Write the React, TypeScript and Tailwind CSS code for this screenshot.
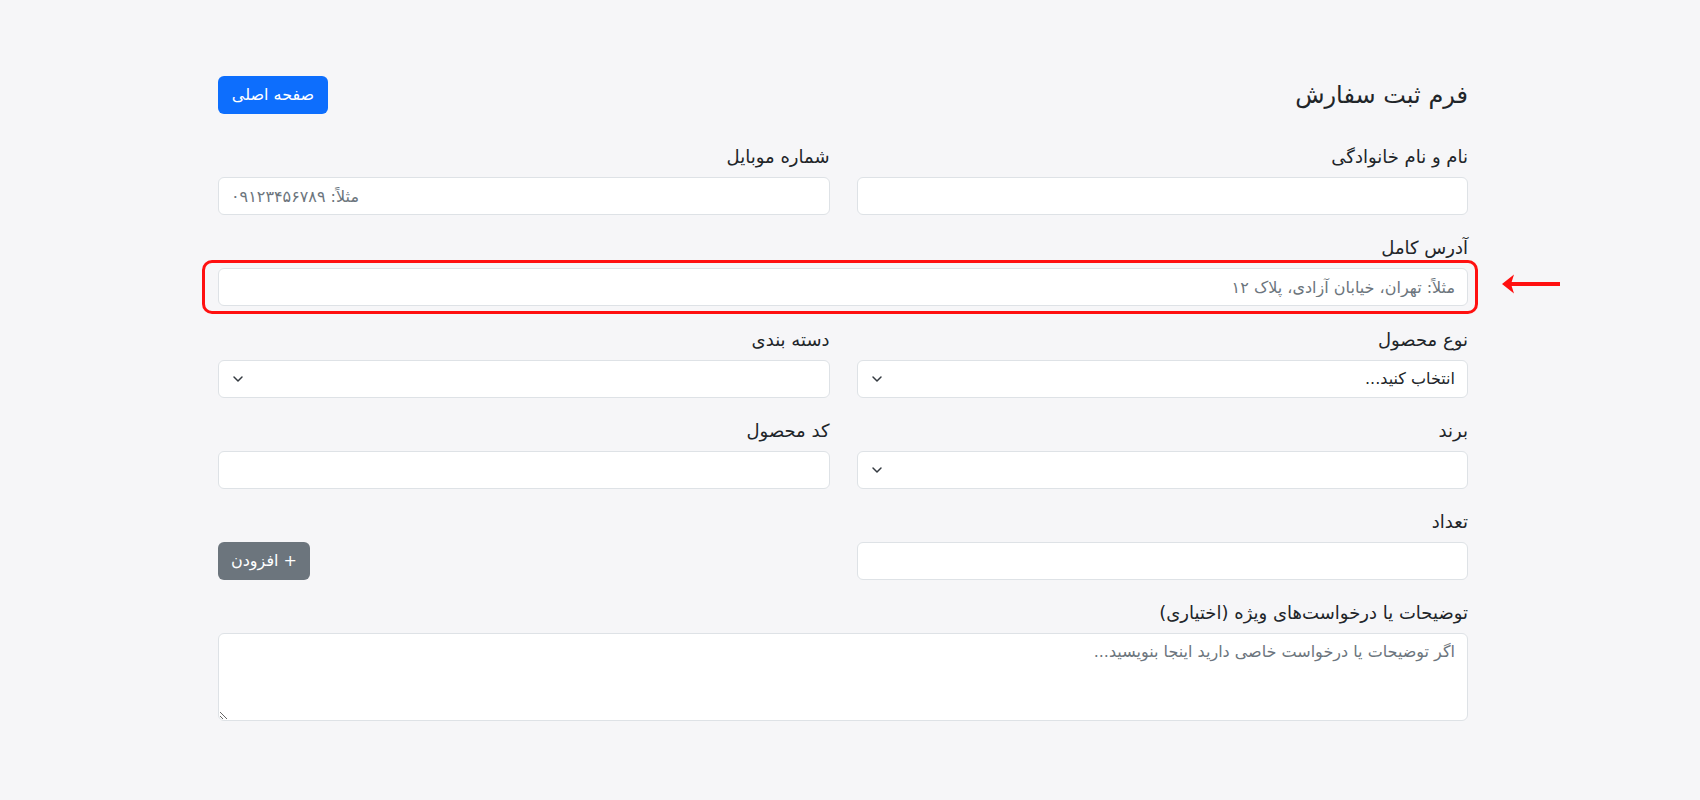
import React from 'react';
import { ChevronDown } from 'lucide-react';

const inputCls =
  'block w-full h-[38px] rounded-md border border-[#dee2e6] bg-white px-3 text-base text-[#212529] placeholder:text-[#6c757d] outline-none';

function Label({ children }: { children: React.ReactNode }) {
  return <label className="block mb-2 text-[18px] leading-6 text-[#212529]">{children}</label>;
}

function Select({ value }: { value?: string }) {
  return (
    <div className="relative">
      <div className={inputCls + ' flex items-center'}>{value}</div>
      <ChevronDown className="absolute left-3 top-1/2 -translate-y-1/2 w-4 h-4 text-[#343a40]" strokeWidth={2.2} />
    </div>
  );
}

export default function App() {
  return (
    <div
      dir="rtl"
      className="min-h-[800px] bg-[#f6f6f8] font-['DejaVu_Sans',sans-serif] text-[#212529]"
    >
      <div className="mr-[232px] w-[1250px] pt-[76px]">
        <div className="flex items-center justify-between mb-[31px]">
          <h4 className="text-2xl leading-7">فرم ثبت سفارش</h4>
          <button className="h-[38px] w-[110px] rounded-md bg-[#0d6efd] text-white text-base">صفحه اصلی</button>
        </div>

        <div className="grid grid-cols-2 gap-x-[27px] gap-y-[21.3px]">
          <div>
            <Label>نام و نام خانوادگی</Label>
            <input className={inputCls} />
          </div>
          <div>
            <Label>شماره موبایل</Label>
            <input dir="ltr" className={inputCls + ' text-left'} placeholder="مثلاً: ۰۹۱۲۳۴۵۶۷۸۹" />
          </div>

          <div className="col-span-2">
            <Label>آدرس کامل</Label>
            <div className="relative">
              <input className={inputCls} placeholder="مثلاً: تهران، خیابان آزادی، پلاک ۱۲" />
              {/* annotation box + arrow */}
              <div className="pointer-events-none absolute -top-2 -bottom-2 -left-4 -right-[10px] rounded-[10px] border-[3px] border-[#ff1010]" />
              <svg
                className="pointer-events-none absolute top-1/2 -translate-y-[14px] -right-[94px]"
                width="60"
                height="22"
                viewBox="0 0 60 22"
              >
                <path d="M0 11 L12 1.5 L9 11 L12 20.5 Z" fill="#ff1010" />
                <rect x="9" y="9" width="49" height="4" fill="#ff1010" />
              </svg>
            </div>
          </div>

          <div>
            <Label>نوع محصول</Label>
            <Select value="انتخاب کنید..." />
          </div>
          <div>
            <Label>دسته بندی</Label>
            <Select />
          </div>

          <div>
            <Label>برند</Label>
            <Select />
          </div>
          <div>
            <Label>کد محصول</Label>
            <input className={inputCls} />
          </div>

          <div>
            <Label>تعداد</Label>
            <input className={inputCls} />
          </div>
          <div className="flex items-end justify-end">
            <button className="h-[38px] w-[92px] rounded-md bg-[#6c757d] text-white text-base">+ افزودن</button>
          </div>

          <div className="col-span-2">
            <Label>توضیحات یا درخواست‌های ویژه (اختیاری)</Label>
            <textarea
              rows={3}
              className="block w-full h-[88px] rounded-md border border-[#dee2e6] bg-white px-3 py-1.5 text-base leading-6 placeholder:text-[#6c757d] outline-none"
              placeholder="اگر توضیحات یا درخواست خاصی دارید اینجا بنویسید..."
            />
          </div>
        </div>
      </div>
    </div>
  );
}
